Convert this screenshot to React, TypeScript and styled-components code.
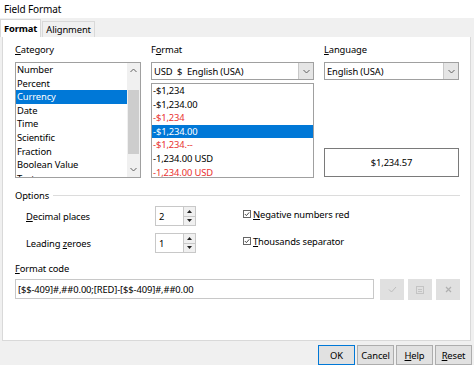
import React from "react";
import styled, { createGlobalStyle } from "styled-components";

const GlobalStyle = createGlobalStyle`
  html, body { margin: 0; padding: 0; background: #fff; }
  body {
    font-family: "Noto Sans", "Open Sans", sans-serif;
    font-size: 9.4px;
    letter-spacing: -0.12px;
    color: #000;
  }
  * { box-sizing: border-box; }
`;

const Window = styled.div`
  width: 474px;
  height: 365px;
  display: flex;
  flex-direction: column;
  background: #f0f0f0;
  overflow: hidden;
`;

const TitleBar = styled.div`
  height: 18px;
  background: #fff;
  padding-left: 4px;
  display: flex;
  align-items: center;
  font-size: 10px;
`;

const TabStrip = styled.div`
  height: 19px;
  display: flex;
  align-items: flex-end;
`;

const Tab = styled.div<{ $active?: boolean }>`
  height: ${(p) => (p.$active ? 18 : 16)}px;
  padding: 0 3px;
  margin-left: ${(p) => (p.$active ? 0 : 1)}px;
  background: ${(p) => (p.$active ? "#fff" : "#f0f0f0")};
  border: 1px solid #d9d9d9;
  border-bottom: none;
  font-weight: ${(p) => (p.$active ? 700 : 400)};
  display: flex;
  align-items: center;
`;

const Panel = styled.div`
  flex: 1;
  margin: 0 3px 0 2px;
  background: #fff;
  border: 1px solid #d9d9d9;
  border-top: none;
  padding: 6px 10px 0 12px;
  display: flex;
  flex-direction: column;
`;

const Mn = styled.span`
  text-decoration: underline;
  text-underline-offset: 1px;
`;

const TopRow = styled.div`
  display: flex;
  gap: 10px;
`;

const Column = styled.div<{ $w: number }>`
  width: ${(p) => p.$w}px;
  display: flex;
  flex-direction: column;
`;

const Label = styled.div`
  height: 14px;
  line-height: 14px;
  margin-bottom: 5px;
`;

const ListBox = styled.div<{ $h: number }>`
  height: ${(p) => p.$h}px;
  border: 1px solid #a0a0a0;
  display: flex;
  overflow: hidden;
`;

const Items = styled.div`
  flex: 1;
  display: flex;
  flex-direction: column;
  min-width: 0;
`;

const Item = styled.div<{ $sel?: boolean; $red?: boolean }>`
  height: 13.6px;
  line-height: 13.6px;
  flex-shrink: 0;
  padding-left: 1px;
  white-space: nowrap;
  background: ${(p) => (p.$sel ? "#0078d7" : "transparent")};
  color: ${(p) => (p.$sel ? "#fff" : p.$red ? "#e8312f" : "#000")};
`;

const ScrollBar = styled.div`
  width: 13px;
  background: #f0f0f0;
  display: flex;
  flex-direction: column;
  align-items: stretch;
`;

const ScrollArrow = styled.div`
  height: 15px;
  display: flex;
  align-items: center;
  justify-content: center;
`;

const Track = styled.div`
  flex: 1;
  display: flex;
  flex-direction: column;
  padding: 12px 0 8px;
`;

const Thumb = styled.div`
  flex: 1;
  margin: 0 1px;
  background: #cdcdcd;
`;

const Combo = styled.div`
  height: 18px;
  border: 1px solid #a0a0a0;
  display: flex;
  align-items: center;
`;

const ComboText = styled.div`
  flex: 1;
  padding-left: 2px;
  white-space: pre;
`;

const ComboButton = styled.div`
  width: 15px;
  height: 16px;
  background: #e5e5e5;
  border-left: 1px solid #c8c8c8;
  display: flex;
  align-items: center;
  justify-content: center;
`;

const FormatList = styled(ListBox)`
  margin-top: 3px;
`;

const LangColumn = styled(Column)`
  justify-content: space-between;
  height: 135px;
`;

const Preview = styled.div`
  height: 29px;
  border: 1px solid #7a7a7a;
  margin-bottom: 1px;
  display: flex;
  align-items: center;
  justify-content: center;
`;

const SectionHead = styled.div`
  margin-top: 10px;
  height: 14px;
  display: flex;
  align-items: center;
  gap: 4px;
`;

const Rule = styled.div`
  flex: 1;
  height: 1px;
  background: #dcdcdc;
`;

const OptionsGrid = styled.div`
  margin-top: 4px;
  display: grid;
  grid-template-columns: 228px 1fr;
  row-gap: 7px;
`;

const SpinRow = styled.div`
  height: 20px;
  display: flex;
  align-items: center;
  padding-left: 11px;
`;

const SpinLabel = styled.div`
  width: 129px;
`;

const Spin = styled.div`
  width: 41px;
  height: 20px;
  border: 1px solid #c8c8c8;
  display: flex;
`;

const SpinValue = styled.div`
  flex: 1;
  padding-left: 3px;
  display: flex;
  align-items: center;
`;

const SpinButtons = styled.div`
  width: 12px;
  display: flex;
  flex-direction: column;
  border-left: 1px solid #c8c8c8;
`;

const SpinBtn = styled.div<{ $down?: boolean }>`
  flex: 1;
  background: #f0f0f0;
  border-top: ${(p) => (p.$down ? "1px solid #c8c8c8" : "none")};
  display: flex;
  align-items: center;
  justify-content: center;
`;

const CheckRow = styled.div`
  height: 20px;
  display: flex;
  align-items: center;
  gap: 2px;
  padding-bottom: 4px;
`;

const CodeLabel = styled(Label)`
  margin-top: 9px;
  margin-bottom: 3px;
`;

const CodeRow = styled.div`
  display: flex;
  gap: 4px;
`;

const CodeInput = styled.div`
  width: 359px;
  height: 20px;
  border: 1px solid #c8c8c8;
  padding-left: 2px;
  display: flex;
  align-items: center;
  margin-right: 2px;
`;

const CodeButton = styled.div`
  width: 24px;
  height: 21px;
  background: #e0e0e0;
  display: flex;
  align-items: center;
  justify-content: center;
`;

const Footer = styled.div`
  height: 24px;
  display: flex;
  justify-content: flex-end;
  align-items: flex-start;
  gap: 2px;
  padding: 4px 2px 0 0;
`;

const DlgButton = styled.div<{ $default?: boolean }>`
  width: 37px;
  height: 20px;
  background: #e1e1e1;
  border: 1px solid ${(p) => (p.$default ? "#0078d7" : "#adadad")};
  display: flex;
  align-items: center;
  justify-content: center;
`;

const Chevron = ({ up }: { up?: boolean }) => (
  <svg width="7" height="5" viewBox="0 0 7 5">
    <path
      d={up ? "M0.5 4 L3.5 1 L6.5 4" : "M0.5 1 L3.5 4 L6.5 1"}
      fill="none"
      stroke="#606060"
      strokeWidth="1"
    />
  </svg>
);

const Tri = ({ up }: { up?: boolean }) => (
  <svg width="5" height="3" viewBox="0 0 5 3">
    <path d={up ? "M0 3 L2.5 0 L5 3 Z" : "M0 0 L2.5 3 L5 0 Z"} fill="#222" />
  </svg>
);

const CheckBox = () => (
  <svg width="8" height="8" viewBox="0 0 8 8">
    <rect x="0.5" y="0.5" width="7" height="7" fill="#fff" stroke="#666" />
    <path d="M1.8 4 L3.4 5.6 L6.2 2.4" fill="none" stroke="#333" strokeWidth="0.9" />
  </svg>
);

const categories = [
  "Number",
  "Percent",
  "Currency",
  "Date",
  "Time",
  "Scientific",
  "Fraction",
  "Boolean Value",
  "Text",
];

const formats: { t: string; red?: boolean }[] = [
  { t: "-$1,234" },
  { t: "-$1,234.00" },
  { t: "-$1,234", red: true },
  { t: "-$1,234.00" },
  { t: "-$1,234.--", red: true },
  { t: "-1,234.00 USD" },
  { t: "-1,234.00 USD", red: true },
];

const App = () => {
  return (
    <Window>
      <GlobalStyle />
      <TitleBar>Field Format</TitleBar>
      <TabStrip>
        <Tab $active>Format</Tab>
        <Tab>Alignment</Tab>
      </TabStrip>
      <Panel>
        <TopRow>
          <Column $w={126}>
            <Label>
              <Mn>C</Mn>ategory
            </Label>
            <ListBox $h={116}>
              <Items>
                {categories.map((c) => (
                  <Item key={c} $sel={c === "Currency"}>
                    {c}
                  </Item>
                ))}
              </Items>
              <ScrollBar>
                <ScrollArrow>
                  <Chevron up />
                </ScrollArrow>
                <Track>
                  <Thumb />
                </Track>
                <ScrollArrow>
                  <Chevron />
                </ScrollArrow>
              </ScrollBar>
            </ListBox>
          </Column>
          <Column $w={163}>
            <Label>
              F<Mn>o</Mn>rmat
            </Label>
            <Combo>
              <ComboText>USD  $  English (USA)</ComboText>
              <ComboButton>
                <Chevron />
              </ComboButton>
            </Combo>
            <FormatList $h={95}>
              <Items>
                {formats.map((f, i) => (
                  <Item key={i} $sel={i === 3} $red={f.red}>
                    {f.t}
                  </Item>
                ))}
              </Items>
            </FormatList>
          </Column>
          <LangColumn $w={135}>
            <div>
              <Label>
                <Mn>L</Mn>anguage
              </Label>
              <Combo>
                <ComboText>English (USA)</ComboText>
                <ComboButton>
                  <Chevron />
                </ComboButton>
              </Combo>
            </div>
            <Preview>$1,234.57</Preview>
          </LangColumn>
        </TopRow>

        <SectionHead>
          Options
          <Rule />
        </SectionHead>
        <OptionsGrid>
          <SpinRow>
            <SpinLabel>
              <Mn>D</Mn>ecimal places
            </SpinLabel>
            <Spin>
              <SpinValue>2</SpinValue>
              <SpinButtons>
                <SpinBtn>
                  <Tri up />
                </SpinBtn>
                <SpinBtn $down>
                  <Tri />
                </SpinBtn>
              </SpinButtons>
            </Spin>
          </SpinRow>
          <CheckRow>
            <CheckBox />
            <span>
              <Mn>N</Mn>egative numbers red
            </span>
          </CheckRow>
          <SpinRow>
            <SpinLabel>
              Leading <Mn>z</Mn>eroes
            </SpinLabel>
            <Spin>
              <SpinValue>1</SpinValue>
              <SpinButtons>
                <SpinBtn>
                  <Tri up />
                </SpinBtn>
                <SpinBtn $down>
                  <Tri />
                </SpinBtn>
              </SpinButtons>
            </Spin>
          </SpinRow>
          <CheckRow>
            <CheckBox />
            <span>
              <Mn>T</Mn>housands separator
            </span>
          </CheckRow>
        </OptionsGrid>

        <CodeLabel>
          <Mn>F</Mn>ormat code
        </CodeLabel>
        <CodeRow>
          <CodeInput>[$$-409]#,##0.00;[RED]-[$$-409]#,##0.00</CodeInput>
          <CodeButton>
            <svg width="9" height="7" viewBox="0 0 9 7">
              <path d="M1 3.5 L3.5 6 L8 1" fill="none" stroke="#bdbdbd" strokeWidth="1" />
            </svg>
          </CodeButton>
          <CodeButton>
            <svg width="8" height="8" viewBox="0 0 8 8">
              <rect x="0.5" y="0.5" width="7" height="7" fill="none" stroke="#c4c4c4" />
              <path d="M2 3.5 H6 M2 5.5 H6" stroke="#c4c4c4" strokeWidth="1" />
            </svg>
          </CodeButton>
          <CodeButton>
            <svg width="7" height="7" viewBox="0 0 7 7">
              <path d="M1 1 L6 6 M6 1 L1 6" stroke="#b0b0b0" strokeWidth="1.2" />
            </svg>
          </CodeButton>
        </CodeRow>
      </Panel>
      <Footer>
        <DlgButton $default>OK</DlgButton>
        <DlgButton>Cancel</DlgButton>
        <DlgButton>
          <span>
            <Mn>H</Mn>elp
          </span>
        </DlgButton>
        <DlgButton>
          <span>
            <Mn>R</Mn>eset
          </span>
        </DlgButton>
      </Footer>
    </Window>
  );
};

export default App;
